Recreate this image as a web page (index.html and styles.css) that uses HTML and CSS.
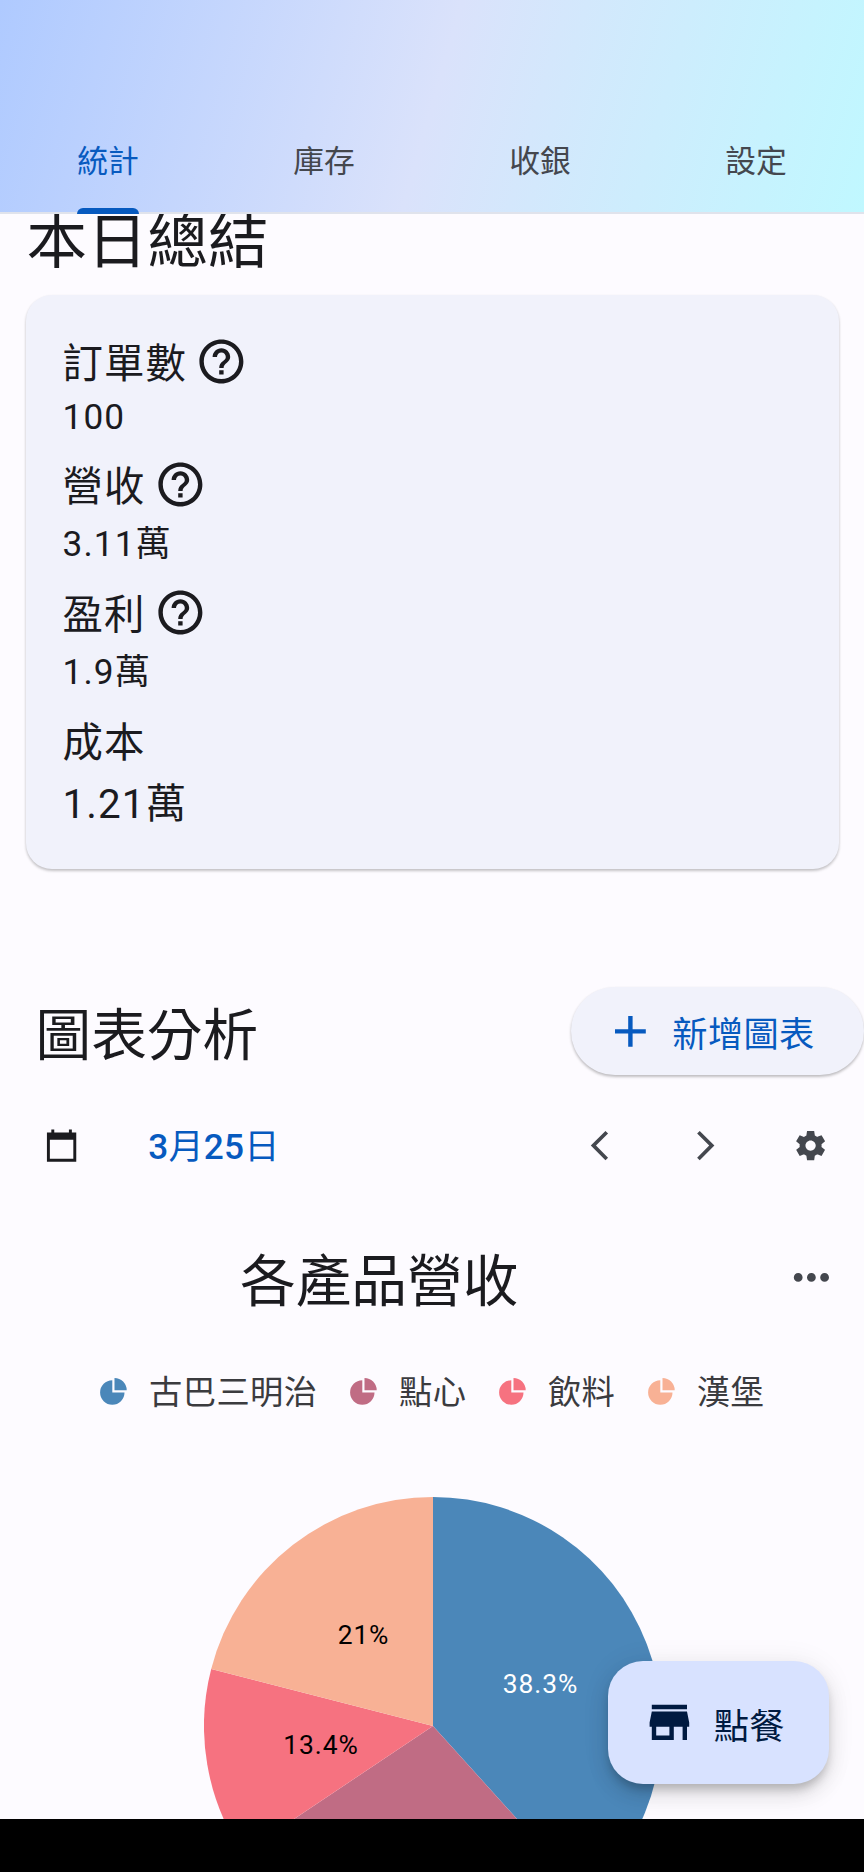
FILE: index.html
```html
<!DOCTYPE html>
<html lang="zh-Hant">
<head>
<meta charset="utf-8">
<title>統計</title>
<link rel="stylesheet" href="styles.css">
</head>
<body>
<header class="tabs">
  <div class="tab active"><span>統計</span></div>
  <div class="tab"><span>庫存</span></div>
  <div class="tab"><span>收銀</span></div>
  <div class="tab"><span>設定</span></div>
</header>
<svg class="defs" width="0" height="0">
  <symbol id="help" viewBox="0 0 24 24"><path d="M11 18h2v-2h-2v2zm1-16C6.48 2 2 6.48 2 12s4.48 10 10 10 10-4.48 10-10S17.52 2 12 2zm0 18c-4.41 0-8-3.59-8-8s3.59-8 8-8 8 3.59 8 8-3.59 8-8 8zm0-14c-2.21 0-4 1.79-4 4h2c0-1.1.9-2 2-2s2 .9 2 2c0 2-3 1.750-3 5h2c0-2.250 3-2.500 3-5 0-2.210-1.790-4-4-4z"/></symbol>
  <symbol id="slice" viewBox="0 0 27 27"><path d="M12.300 2.300A12.200 12.200 0 1 0 24.500 14.500H12.300zM14.500 0A12.200 12.200 0 0 1 26.700 12.200H14.500z"/></symbol>
</svg>
<main class="content">
  <h1 class="page-title">本日總結</h1>
  <section class="card">
    <div class="metric"><span class="label">訂單數</span><svg class="icon"><use href="#help"/></svg></div>
    <div class="value orders">100</div>
    <div class="metric"><span class="label">營收</span><svg class="icon"><use href="#help"/></svg></div>
    <div class="value revenue">3.11萬</div>
    <div class="metric"><span class="label">盈利</span><svg class="icon"><use href="#help"/></svg></div>
    <div class="value profit">1.9萬</div>
    <div class="metric plain"><span class="label">成本</span></div>
    <div class="value cost">1.21萬</div>
  </section>
  <section class="chart-head">
    <h2 class="heading">圖表分析</h2>
    <button class="add"><svg class="icon" viewBox="0 0 24 24"><path d="M19 13h-6v6h-2v-6H5v-2h6V5h2v6h6v2z"/></svg><span>新增圖表</span></button>
  </section>
  <section class="date-row">
    <svg class="icon-sm calendar" viewBox="0 0 24 24"><path d="M22 3h-3V1h-2v2H7V1H5v2H2v20h20V3zM20 21H4V8h16v13z"/></svg>
    <div class="date">3<i>月</i>25<i>日</i></div>
    <div class="actions">
      <svg class="icon-sm" viewBox="0 0 24 24"><path d="M17.770 3.770 16 2 6 12l10 10 1.770-1.770L9.540 12z"/></svg>
      <svg class="icon-sm" viewBox="0 0 24 24"><path d="M6.230 20.230 8 22l10-10L8 2 6.230 3.770 14.460 12z"/></svg>
      <svg class="icon-sm" viewBox="0 0 24 24"><path d="M19.440 12.990l-.01.02c.04-.33.08-.67.08-1.010 0-.34-.03-.66-.07-.99l.01.02 2.440-1.920-2.430-4.220-2.870 1.160.01.01c-.52-.4-1.090-.74-1.710-1h.01L14.440 2H9.570l-.44 3.070h.01c-.62.26-1.190.6-1.710 1l.01-.01-2.880-1.170-2.440 4.220 2.440 1.920.01-.02c-.04.33-.07.65-.07.99 0 .34.03.68.08 1.010l-.01-.02-2.100 1.650-.33.26 2.430 4.200 2.880-1.150-.02-.04c.53.41 1.100.75 1.730 1.010h-.03L9.580 22h4.850s.03-.18.06-.42l.38-2.650h-.01c.62-.26 1.200-.6 1.730-1.010l-.02.04 2.880 1.150 2.430-4.200s-.14-.12-.33-.26l-2.110-1.660zM12 15.500c-1.930 0-3.500-1.570-3.500-3.500s1.570-3.500 3.500-3.500 3.500 1.570 3.500 3.500-1.570 3.500-3.500 3.500z"/></svg>
    </div>
  </section>
  <section class="pie-head">
    <h2 class="heading">各產品營收</h2>
    <svg class="icon" viewBox="0 0 24 24"><path d="M6 10c-1.100 0-2 .9-2 2s.9 2 2 2 2-.9 2-2-.9-2-2-2zm12 0c-1.100 0-2 .9-2 2s.9 2 2 2 2-.9 2-2-.9-2-2-2zm-6 0c-1.100 0-2 .9-2 2s.9 2 2 2 2-.9 2-2-.9-2-2-2z"/></svg>
  </section>
  <section class="legend">
    <div class="item"><svg class="slice blue"><use href="#slice"/></svg><span>古巴三明治</span></div>
    <div class="item"><svg class="slice mauve"><use href="#slice"/></svg><span>點心</span></div>
    <div class="item"><svg class="slice red"><use href="#slice"/></svg><span>飲料</span></div>
    <div class="item"><svg class="slice peach"><use href="#slice"/></svg><span>漢堡</span></div>
  </section>
  <svg class="pie" viewBox="-229 -229 458 458">
    <path class="blue" d="M0 0V-229A229 229 0 0 1 153.500 169.900z"/>
    <path class="mauve" d="M0 0L153.500 169.900A229 229 0 0 1 -190.300 127.400z"/>
    <path class="red" d="M0 0L-190.300 127.400A229 229 0 0 1 -221.800 -57z"/>
    <path class="peach" d="M0 0L-221.800 -57A229 229 0 0 1 0 -229z"/>
    <text class="light" x="107.500" y="-33">38.3%</text>
    <text x="-112" y="28">13.4%</text>
    <text x="-69.500" y="-82">21%</text>
  </svg>
  <button class="fab"><svg class="icon" viewBox="0 0 24 24"><path d="M20 4H4v2h16V4zm1 10v-2l-1-5H4l-1 5v2h1v6h10v-6h4v6h2v-6h1zm-9 4H6v-4h6v4z"/></svg><span>點餐</span></button>
</main>
<footer class="system-bar"></footer>
</body>
</html>
```
FILE: styles.css
```css
* { box-sizing: border-box; }
body {
  margin: 0;
  width: 864px;
  height: 1872px;
  display: flex;
  flex-direction: column;
  overflow: hidden;
  background: #fdfbff;
  color: #1b1b1f;
  font-family: Roboto, "Noto Sans CJK TC", sans-serif;
}
h1, h2 { margin: 0; font-weight: 400; white-space: nowrap; }
button { border: 0; font: inherit; display: flex; align-items: center; white-space: nowrap; }
svg { flex: none; fill: currentColor; }
.defs { position: absolute; }
.icon { width: 52.8px; height: 52.8px; }
.icon-sm { width: 35.2px; height: 35.2px; }

.tabs {
  flex: none;
  height: 214px;
  display: flex;
  align-items: flex-end;
  background: linear-gradient(106deg, #afcaff 0%, #dae2fb 50%, #c0f8ff 100%);
  border-bottom: 2px solid #e0e3ec;
  position: relative;
  z-index: 1;
}
.tab {
  flex: 1;
  height: 106px;
  display: flex;
  justify-content: center;
  font-size: 30.8px;
  line-height: 112px;
  color: #44474e;
}
.tab.active { color: #075abf; }
.tab span { position: relative; height: 106px; }
.active span::after {
  content: "";
  position: absolute;
  left: 0;
  right: 0;
  bottom: -2px;
  height: 6.500px;
  border-radius: 6px 6px 0 0;
  background: #075abf;
}

.content { position: relative; flex: none; height: 1605px; overflow: hidden; }
.page-title { height: 80.500px; padding-left: 26.500px; font-size: 60.500px; line-height: 58px; }
.card {
  height: 574.500px;
  margin: 0 25.500px;
  padding: 40px 37px 0;
  border-radius: 26px;
  background: #f1f2fb;
  box-shadow: 0 2px 3px rgba(0, 0, 0, .2), 0 1px 3px rgba(0, 0, 0, .06);
}
.metric { height: 53px; display: flex; align-items: center; gap: 8.500px; }
.label { font-size: 40.400px; letter-spacing: 1.100px; line-height: 50px; margin-top: 7px; }
.plain .label { margin-top: 3px; }
.value { font-size: 35.200px; letter-spacing: 1.100px; }
.orders { line-height: 58px; margin-bottom: 12px; }
.revenue { line-height: 67px; margin-bottom: 8px; }
.profit { line-height: 67px; margin-bottom: 10.500px; }
.cost { font-size: 40.400px; line-height: 72px; }

.chart-head {
  height: 88px;
  margin-top: 118px;
  padding-left: 35.500px;
  display: flex;
  justify-content: space-between;
  align-items: center;
}
.heading { font-size: 55.700px; line-height: 80px; }
.chart-head .heading { margin-top: 9px; }
.add {
  width: 293px;
  height: 88px;
  padding: 0 0 0 32.500px;
  gap: 16px;
  border-radius: 44px;
  background: #f1f2fb;
  color: #075abf;
  font-size: 35.200px;
  letter-spacing: .4px;
  box-shadow: 0 2px 3px rgba(0, 0, 0, .22), 0 1px 3px rgba(0, 0, 0, .06);
}
.add span { margin-top: 1px; }
.fab span { margin-top: 2px; }

.date-row { height: 106px; margin-top: 17.500px; display: flex; align-items: center; padding: 0 35.400px 0 44px; }
.date { margin-left: 69px; margin-top: -4px; font-size: 35.200px; font-weight: 500; letter-spacing: .2px; color: #075abf; }
.date i { font-style: normal; font-weight: 400; }
.actions { margin-left: auto; display: flex; gap: 70.400px; color: #44474e; }

.pie-head { height: 106px; margin-top: 26px; padding: 0 26.600px 0 0; display: flex; align-items: center; color: #44474e; }
.pie-head .heading { flex: 1; padding-left: 240px; margin-top: 9px; color: #1b1b1f; }

.legend { height: 60px; margin-top: 30.500px; padding-left: 100px; display: flex; gap: 32.500px; align-items: center; }
.item { display: flex; align-items: center; gap: 22px; font-size: 33.300px; letter-spacing: .4px; line-height: 50px; color: #3b3b3f; }
.item span { margin-top: 4px; }
.slice { width: 27px; height: 27px; }
.blue { fill: #4b87b9; }
.mauve { fill: #c06c84; }
.red { fill: #f67280; }
.peach { fill: #f8b195; }

.pie { display: block; width: 458px; height: 458px; margin: 75.500px 0 0 203.500px; }
.pie text { font-size: 26.400px; letter-spacing: .9px; text-anchor: middle; fill: #000; }
.pie .light { fill: #fff; }

.fab {
  position: absolute;
  left: 608px;
  top: 1447px;
  width: 221px;
  height: 123px;
  padding: 0 0 0 35px;
  gap: 18px;
  border-radius: 35px;
  background: #d8e2ff;
  color: #001a41;
  font-size: 35.200px;
  letter-spacing: .3px;
  box-shadow: 0 7px 10px -2px rgba(0, 0, 0, .2), 0 12px 22px rgba(0, 0, 0, .1), 0 2px 30px rgba(0, 0, 0, .07);
}
.system-bar { flex: none; height: 53px; background: #000; }
```
